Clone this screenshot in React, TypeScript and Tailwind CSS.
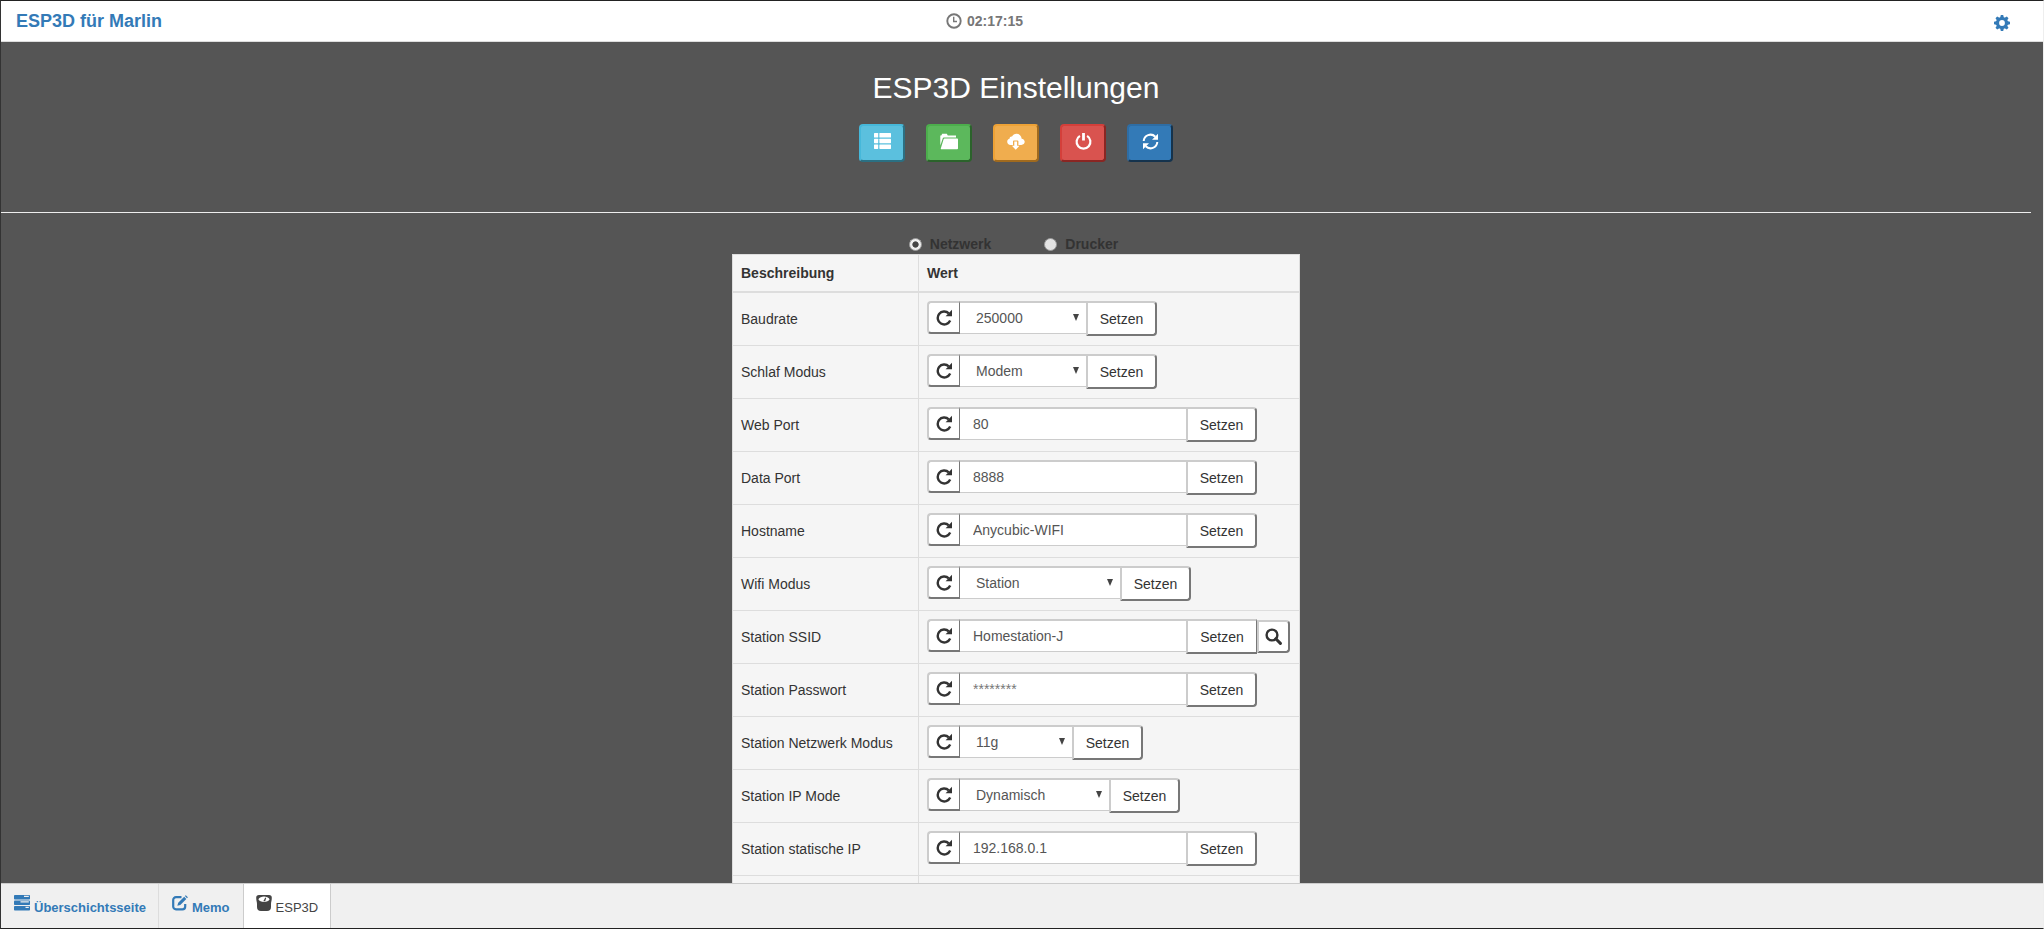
import React from "react";

type IconProps = { className?: string };

const RepeatIcon = ({ className = "size-[17px]" }: IconProps) => (
  <svg viewBox="0 0 17 17" className={className} aria-hidden="true">
    <path d="M12.800 4.300A6.500 6.500 0 1 0 14.200 11.600" fill="none" stroke="currentColor" strokeWidth="2.400" />
    <path d="M16 .8v6.400H9.600z" fill="currentColor" />
  </svg>
);

const SearchIcon = ({ className = "size-[17px]" }: IconProps) => (
  <svg viewBox="0 0 17 17" className={className} aria-hidden="true">
    <circle cx="7" cy="7" r="5.400" fill="none" stroke="currentColor" strokeWidth="2.400" />
    <path d="M10.800 10.800l4.600 4.600" stroke="currentColor" strokeWidth="3" strokeLinecap="round" />
  </svg>
);

const ListIcon = ({ className = "h-4 w-[17px]" }: IconProps) => (
  <svg viewBox="0 0 17 16" className={className} fill="currentColor" aria-hidden="true">
    {[0, 5.700, 11.400].map((y) => (
      <g key={y}>
        <rect x="0" y={y} width="4.200" height="4.500" rx=".6" />
        <rect x="5.400" y={y} width="11.600" height="4.500" rx=".6" />
      </g>
    ))}
  </svg>
);

const FolderIcon = ({ className = "h-[17px] w-[18px]" }: IconProps) => (
  <svg viewBox="0 0 18 17" className={className} fill="currentColor" aria-hidden="true">
    <path d="M.3 12.500V2.600h1L2.200.8h4.600l1 1.800h8.200v1.800H4.200c-.8 0-1.200.3-1.500 1z" />
    <path d="M4.600 5.500h12.600c.5 0 .8.3.8.800v9.100c0 .5-.4.800-.9.800H1.400c-.5 0-.8-.3-.6-.8L3.600 6.200c.2-.5.5-.7 1-.7z" />
  </svg>
);

const CloudDownIcon = ({ className = "h-[17px] w-[18px]" }: IconProps) => (
  <svg viewBox="0 0 18 17" className={className} fill="currentColor" aria-hidden="true">
    <path d="M3.600 11.900H6V8.200c0-.5.3-.8.8-.8h3.800c.5 0 .8.3.8.800v3.700h2.900c2 0 3.400-1.300 3.400-3.100 0-1.700-1.300-3-3-3.100C14.400 2.900 12.300.8 9.500.8 7.500.8 5.800 1.900 5 3.600 3.700 3.200 2.500 4.200 2.700 5.600 1.200 6 .2 7.200.2 8.700c0 1.800 1.400 3.200 3.400 3.200z" />
    <path d="M7.300 8.600h2.800v4.200h2.400l-3.800 4-3.800-4h2.400z" />
  </svg>
);

const PowerIcon = ({ className = "size-[17px]" }: IconProps) => (
  <svg viewBox="0 0 17 17" className={className} fill="none" stroke="currentColor" strokeWidth="2.200" aria-hidden="true">
    <path d="M4.900 2.900a6.900 6.900 0 1 0 7.200 0" />
    <path d="M8.500 0v7.500" strokeWidth="2.800" />
  </svg>
);

const RefreshIcon = ({ className = "size-[17px]" }: IconProps) => (
  <svg viewBox="0 0 17 17" className={className} aria-hidden="true">
    <path d="M1.700 8A6.800 6.800 0 0 1 13.300 3.700M15.300 9A6.800 6.800 0 0 1 3.700 13.300" fill="none" stroke="currentColor" strokeWidth="2" />
    <path d="M16 .7v6h-6zM1 16.300v-6h6z" fill="currentColor" />
  </svg>
);

const ClockIcon = ({ className = "size-4" }: IconProps) => (
  <svg viewBox="0 0 16 16" className={className} fill="none" stroke="currentColor" aria-hidden="true">
    <circle cx="8" cy="8" r="6.700" strokeWidth="1.900" />
    <path d="M7.700 3.800v4.700h3.300" strokeWidth="1.400" />
  </svg>
);

const CogIcon = ({ className = "size-4" }: IconProps) => (
  <svg viewBox="0 0 16 16" className={className} aria-hidden="true">
    <circle cx="8" cy="8" r="4.500" fill="none" stroke="currentColor" strokeWidth="3.200" />
    {[0, 45, 90, 135, 180, 225, 270, 315].map((a) => (
      <path key={a} d="M6.100 3L6.800 0h2.400l.7 3z" fill="currentColor" transform={`rotate(${a} 8 8)`} />
    ))}
  </svg>
);

const TasksIcon = ({ className = "size-4" }: IconProps) => (
  <svg viewBox="0 0 16 16" className={className} aria-hidden="true">
    {[0, 5.500, 11].map((y) => (
      <rect key={y} x="0" y={y} width="16" height="4.600" rx=".8" fill="currentColor" />
    ))}
    <path d="M10 1.400h4.800M6.500 6.900h8.300M11.500 12.400h3.300" stroke="#f0f0f0" strokeWidth="1.200" />
  </svg>
);

const EditIcon = ({ className = "size-4" }: IconProps) => (
  <svg viewBox="0 0 16 16" className={className} aria-hidden="true">
    <path
      d="M9.500 2.200H4A2.800 2.800 0 0 0 1.200 5v6.600A2.800 2.800 0 0 0 4 14.400h6.400a2.800 2.800 0 0 0 2.800-2.800V9"
      fill="none"
      stroke="currentColor"
      strokeWidth="2.200"
    />
    <path d="M5.300 10.800l.9-3 6-6 2.100 2.100-6 6zM12.900 1.100l.9-.9 2.100 2.100-.9.900z" fill="currentColor" />
  </svg>
);

const ScaleIcon = ({ className = "size-4" }: IconProps) => (
  <svg viewBox="0 0 16 16" className={className} aria-hidden="true">
    <path
      d="M3 0h10a2.800 2.800 0 0 1 2.800 2.800c0 3-.8 4-.8 6.200v3a4 4 0 0 1-4 4H5a4 4 0 0 1-4-4V9C1 6.800.2 5.800.2 2.800A2.800 2.800 0 0 1 3 0z"
      fill="currentColor"
    />
    <path d="M2.400 4.200C3.500 2.300 5.600 1.400 8 1.400s4.500.9 5.600 2.800C12.800 6 10.500 6.900 8 6.900S3.200 6 2.400 4.200z" fill="#fff" />
    <path d="M7.300 6.200l2-3.600.9.400-1 3.200z" fill="currentColor" />
  </svg>
);

type Row = {
  label: string;
  value: string;
  kind: "select" | "text" | "password";
  width: string;
  scan?: boolean;
};

const rows: Row[] = [
  { label: "Baudrate", value: "250000", kind: "select", width: "w-[126px]" },
  { label: "Schlaf Modus", value: "Modem", kind: "select", width: "w-[126px]" },
  { label: "Web Port", value: "80", kind: "text", width: "w-[226px]" },
  { label: "Data Port", value: "8888", kind: "text", width: "w-[226px]" },
  { label: "Hostname", value: "Anycubic-WIFI", kind: "text", width: "w-[226px]" },
  { label: "Wifi Modus", value: "Station", kind: "select", width: "w-[160px]" },
  { label: "Station SSID", value: "Homestation-J", kind: "text", width: "w-[226px]", scan: true },
  { label: "Station Passwort", value: "********", kind: "password", width: "w-[226px]" },
  { label: "Station Netzwerk Modus", value: "11g", kind: "select", width: "w-[112px]" },
  { label: "Station IP Mode", value: "Dynamisch", kind: "select", width: "w-[149px]" },
  { label: "Station statische IP", value: "192.168.0.1", kind: "text", width: "w-[226px]" },
];

const outset = "border-t-2 border-l-2 border-b-2 border-t-[#ccc] border-l-[#ccc] border-r-[#777] border-b-[#777] bg-white text-[#333]";
const field = "h-[33px] w-full border-t-2 border-b border-[#ccc] bg-white text-sm text-[#555] outline-none";

function SettingRow({ row, id }: { row: Row; id: string }) {
  return (
    <tr className="h-[53px]">
      <td className="border-x border-b border-[#ddd] px-2">
        <label htmlFor={id}>{row.label}</label>
      </td>
      <td className="border-r border-b border-[#ddd] px-2 pt-2 align-top">
        <div className="flex items-start">
          <button
            type="button"
            aria-label="Neu laden"
            className={`flex h-[33px] w-[33px] shrink-0 items-center justify-center rounded-l border-r ${outset}`}
          >
            <RepeatIcon />
          </button>
          <div className={`relative shrink-0 ${row.width}`}>
            {row.kind === "select" ? (
              <>
                <select id={id} defaultValue={row.value} className={`appearance-none pl-4 ${field}`}>
                  <option>{row.value}</option>
                </select>
                <svg viewBox="0 0 6 7" className="pointer-events-none absolute top-[13px] right-[7px] h-[7px] w-1.5" aria-hidden="true">
                  <path d="M0 0h6L3 7z" fill="#444" />
                </svg>
              </>
            ) : (
              <input
                id={id}
                type="text"
                defaultValue={row.kind === "password" ? undefined : row.value}
                placeholder={row.kind === "password" ? row.value : undefined}
                className={`px-[13px] placeholder:text-[#777] ${field}`}
              />
            )}
          </div>
          <button
            type="button"
            className={`h-[35px] w-[71px] shrink-0 ${row.scan ? "border-r" : "rounded-r border-r-2"} ${outset}`}
          >
            Setzen
          </button>
          {row.scan && (
            <button
              type="button"
              aria-label="Suchen"
              className={`mt-px flex h-[33px] w-[33px] shrink-0 items-center justify-center rounded-r border-r-2 ${outset}`}
            >
              <SearchIcon />
            </button>
          )}
        </div>
      </td>
    </tr>
  );
}

const actions = [
  { name: "Liste", icon: <ListIcon />, tone: "bg-[#5bc0de] border-t-[#46b8da] border-l-[#46b8da] border-r-[#2b7083] border-b-[#2b7083]" },
  { name: "Dateien", icon: <FolderIcon />, tone: "bg-[#5cb85c] border-t-[#4cae4c] border-l-[#4cae4c] border-r-[#2b632b] border-b-[#2b632b]" },
  { name: "Update", icon: <CloudDownIcon />, tone: "bg-[#f0ad4e] border-t-[#eea236] border-l-[#eea236] border-r-[#a06a1e] border-b-[#a06a1e]" },
  { name: "Neustart", icon: <PowerIcon />, tone: "bg-[#d9534f] border-t-[#d43f3a] border-l-[#d43f3a] border-r-[#8a2623] border-b-[#8a2623]" },
  { name: "Aktualisieren", icon: <RefreshIcon />, tone: "bg-[#337ab7] border-t-[#2e6da4] border-l-[#2e6da4] border-r-[#15334d] border-b-[#15334d]" },
];

const radio =
  "size-[13px] appearance-none rounded-full border border-[#999] bg-[#e4e4e4] checked:bg-radial checked:from-[#444] checked:from-35% checked:to-[#eee] checked:to-45%";

export default function App() {
  return (
    <div className="flex h-screen flex-col border-y border-r border-l border-t-[#222] border-r-[#eee] border-b-[#222] border-l-[#333] bg-[#555] font-['Liberation_Sans',Arial,sans-serif] text-sm leading-5 text-[#333]">
      <header className="grid h-[41px] shrink-0 grid-cols-3 items-center border-b border-[#ddd] bg-white">
        <a href="#" className="pl-[15px] text-lg font-bold text-[#337ab7]">
          ESP3D für Marlin
        </a>
        <div className="flex items-center justify-center gap-[5px] pr-[75px] font-bold text-[#777]">
          <ClockIcon />
          <span>02:17:15</span>
        </div>
        <div className="flex justify-end pt-1 pr-[33px]">
          <button type="button" aria-label="Einstellungen" className="text-[#337ab7]">
            <CogIcon />
          </button>
        </div>
      </header>

      <main className="min-h-0 flex-1 overflow-y-auto pt-[29px] pr-3 [scrollbar-width:none]">
        <h1 className="text-center text-[30px] leading-[34px] text-white">ESP3D Einstellungen</h1>
        <div className="mt-[19px] flex justify-center gap-[21px]">
          {actions.map((a) => (
            <button
              key={a.name}
              type="button"
              aria-label={a.name}
              className={`flex h-[38px] w-[46px] items-center justify-center rounded border-2 pb-1 text-white ${a.tone}`}
            >
              {a.icon}
            </button>
          ))}
        </div>
        <hr className="mt-[50px] border-[#eee]" />
        <div className="mt-[21px] flex justify-center gap-[53px] pr-[5px] font-bold">
          <label className="flex items-center gap-2">
            <input type="radio" name="view" defaultChecked className={radio} />
            Netzwerk
          </label>
          <label className="flex items-center gap-2">
            <input type="radio" name="view" className={radio} />
            Drucker
          </label>
        </div>
        <table className="mx-auto w-[568px] table-fixed border-separate border-spacing-0 bg-[#f5f5f5]">
          <thead>
            <tr className="h-[39px] text-left">
              <th className="w-[187px] border-x border-t border-b-2 border-[#ddd] px-2">Beschreibung</th>
              <th className="border-t border-r border-b-2 border-[#ddd] px-2">Wert</th>
            </tr>
          </thead>
          <tbody>
            {rows.map((row, i) => (
              <SettingRow key={row.label} row={row} id={`setting-${i}`} />
            ))}
            <tr className="h-[53px]">
              <td className="border-x border-b border-[#ddd]" />
              <td className="border-r border-b border-[#ddd]" />
            </tr>
          </tbody>
        </table>
      </main>

      <nav className="flex h-[45px] shrink-0 border-t border-[#ccc] bg-[#f0f0f0] text-[13px] font-bold text-[#337ab7]">
        <a href="#" className="flex items-center gap-1 border-r border-[#ddd] pr-3 pl-[13px]">
          <TasksIcon className="mb-1.5 size-4" />
          <span className="pt-1">Überschichtsseite</span>
        </a>
        <a href="#" className="flex items-center gap-1 border-r border-[#ccc] px-[13px]">
          <EditIcon className="mb-1.5 size-4" />
          <span className="pt-1">Memo</span>
        </a>
        <a href="#" className="flex items-center gap-1 border-r border-[#ccc] bg-white px-3 font-normal text-[#444]">
          <ScaleIcon className="mb-1.5 size-4" />
          <span className="pt-1">ESP3D</span>
        </a>
      </nav>
    </div>
  );
}
